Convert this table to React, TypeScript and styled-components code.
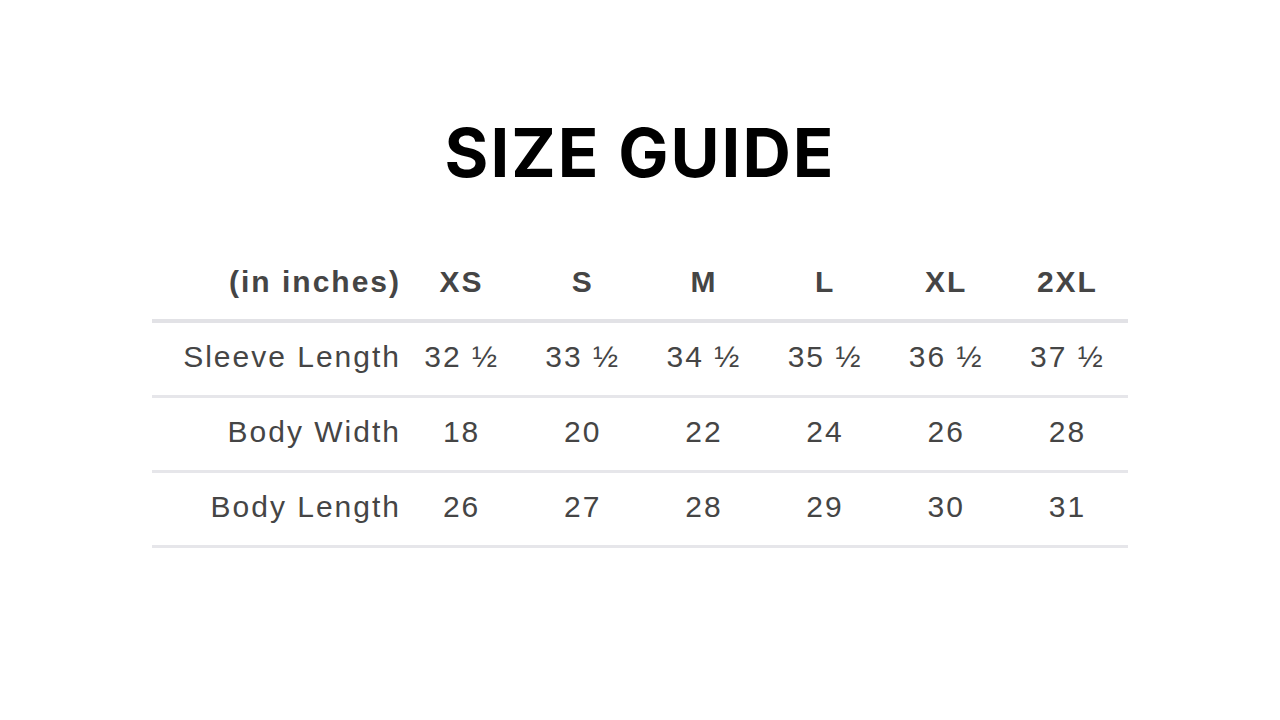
import React from "react";
import styled, { createGlobalStyle } from "styled-components";

const GlobalStyle = createGlobalStyle`
  html, body {
    margin: 0;
    padding: 0;
    background: #fff;
  }
`;

const Page = styled.main`
  width: 1280px;
  height: 720px;
  display: flex;
  flex-direction: column;
  align-items: center;
  background: #fff;
`;

const Title = styled.h1`
  margin: 108px 0 0;
  font-family: Inter, "Open Sans", "Liberation Sans", sans-serif;
  font-weight: 700;
  font-size: 67px;
  line-height: 90px;
  color: #000;
  letter-spacing: 2px;
`;

const Table = styled.table`
  margin-top: 53px;
  width: 976px;
  border-collapse: collapse;
  font-family: "Liberation Sans", Arial, sans-serif;
  font-size: 30px;
  letter-spacing: 2px;
  color: #454545;
`;

const HeadCell = styled.th<{ $label?: boolean }>`
  height: 62px;
  padding: 0 0 6px;
  font-weight: 700;
  text-align: ${(p) => (p.$label ? "right" : "center")};
  width: ${(p) => (p.$label ? "249px" : "auto")};
  border-bottom: 4px solid #e2e2e6;
  vertical-align: middle;
`;

const Cell = styled.td<{ $label?: boolean }>`
  height: 68px;
  padding: 0 0 4px;
  font-weight: 400;
  text-align: ${(p) => (p.$label ? "right" : "center")};
  border-bottom: 3px solid #e6e6ea;
  vertical-align: middle;
  white-space: nowrap;
`;

const sizes = ["XS", "S", "M", "L", "XL", "2XL"];

const rows: { label: string; values: string[] }[] = [
  { label: "Sleeve Length", values: ["32 ½", "33 ½", "34 ½", "35 ½", "36 ½", "37 ½"] },
  { label: "Body Width", values: ["18", "20", "22", "24", "26", "28"] },
  { label: "Body Length", values: ["26", "27", "28", "29", "30", "31"] },
];

const App: React.FC = () => {
  return (
    <>
      <GlobalStyle />
      <Page>
        <Title>SIZE GUIDE</Title>
        <Table>
          <thead>
            <tr>
              <HeadCell $label>(in inches)</HeadCell>
              {sizes.map((s) => (
                <HeadCell key={s}>{s}</HeadCell>
              ))}
            </tr>
          </thead>
          <tbody>
            {rows.map((row) => (
              <tr key={row.label}>
                <Cell $label>{row.label}</Cell>
                {row.values.map((v, i) => (
                  <Cell key={i}>{v}</Cell>
                ))}
              </tr>
            ))}
          </tbody>
        </Table>
      </Page>
    </>
  );
};

export default App;
